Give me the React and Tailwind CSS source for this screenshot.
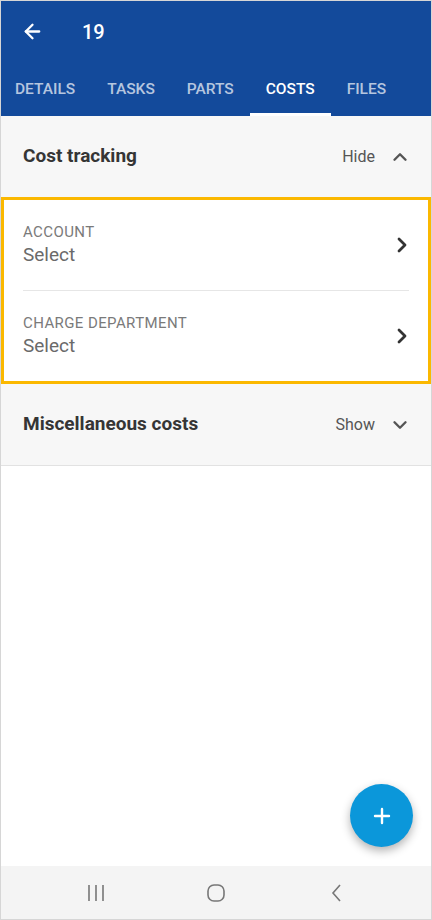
import { ArrowLeft, ChevronUp, ChevronDown, ChevronRight, Plus } from 'lucide-react'

const tabs = ['Details', 'Tasks', 'Parts', 'Costs', 'Files']

function SectionHeader({ title, action, open }) {
  return (
    <div className="h-[81px] bg-[#f7f7f7] flex items-center justify-between pl-[22px] pr-[20px]">
      <span className="text-[19px] font-bold text-[#353535]">{title}</span>
      <div className="flex items-center gap-[14px] text-[#555]">
        <span className="text-[16px]">{action}</span>
        {open ? (
          <ChevronUp className="w-[22px] h-[22px]" strokeWidth={2.6} />
        ) : (
          <ChevronDown className="w-[22px] h-[22px]" strokeWidth={2.6} />
        )}
      </div>
    </div>
  )
}

function PickerRow({ label }) {
  return (
    <div className="h-[90px] flex items-center justify-between pl-[19px] pr-[14px]">
      <div className="flex flex-col">
        <span className="text-[15px] leading-[19px] tracking-[0.4px] text-[#7a7a7a] uppercase">{label}</span>
        <span className="text-[19px] leading-[26px] text-[#6a6a6a]">Select</span>
      </div>
      <ChevronRight className="w-[24px] h-[24px] text-[#333]" strokeWidth={2.8} />
    </div>
  )
}

export default function App() {
  return (
    <div
      className="relative w-[432px] h-[920px] flex flex-col border border-[#d6d6d6] bg-white overflow-hidden"
      style={{ fontFamily: 'Roboto, "Noto Sans", sans-serif' }}
    >
      <header className="h-[115px] bg-[#134a9b] flex flex-col shrink-0">
        <div className="h-[61px] flex items-center pl-[20px] text-white">
          <ArrowLeft className="w-[23px] h-[23px]" strokeWidth={2.4} />
          <span className="ml-[38px] text-[20px] font-medium">19</span>
        </div>
        <nav className="h-[54px] flex -ml-[2px]">
          {tabs.map((t) => (
            <div
              key={t}
              className={
                t === 'Costs'
                  ? 'h-full flex items-center px-4 border-b-[3px] border-white text-white text-[15.5px] font-medium uppercase pt-[4px]'
                  : 'h-full flex items-center px-4 border-b-[3px] border-transparent text-white/70 text-[15.5px] font-medium uppercase pt-[4px]'
              }
            >
              {t}
            </div>
          ))}
        </nav>
      </header>

      <SectionHeader title="Cost tracking" action="Hide" open />

      <div className="border-[3px] border-[#fbb800] bg-white">
        <PickerRow label="Account" />
        <div className="mx-[19px] border-t border-[#e6e6e6]" />
        <PickerRow label="Charge department" />
      </div>

      <div className="border-b border-[#e2e2e2]">
        <SectionHeader title="Miscellaneous costs" action="Show" />
      </div>

      <div className="flex-1 bg-white" />

      <button className="absolute left-[349px] top-[783px] w-[63px] h-[63px] rounded-full bg-[#0b97da] flex items-center justify-center shadow-[0_4px_10px_rgba(0,0,0,0.3)]">
        <Plus className="w-[24px] h-[24px] text-white" strokeWidth={2.4} />
      </button>

      <div className="h-[53px] bg-[#f4f4f4] flex items-center justify-center gap-[100px] shrink-0 text-[#777]">
        <svg width="20" height="20" viewBox="0 0 20 20" fill="none" stroke="currentColor" strokeWidth="1.6">
          <path d="M3 2v16M10 2v16M17 2v16" />
        </svg>
        <svg width="20" height="20" viewBox="0 0 20 20" fill="none" stroke="currentColor" strokeWidth="1.6">
          <rect x="2" y="2" width="16" height="16" rx="6" />
        </svg>
        <svg width="20" height="20" viewBox="0 0 20 20" fill="none" stroke="currentColor" strokeWidth="1.6">
          <path d="M14 2L7 10l7 8" />
        </svg>
      </div>
    </div>
  )
}
